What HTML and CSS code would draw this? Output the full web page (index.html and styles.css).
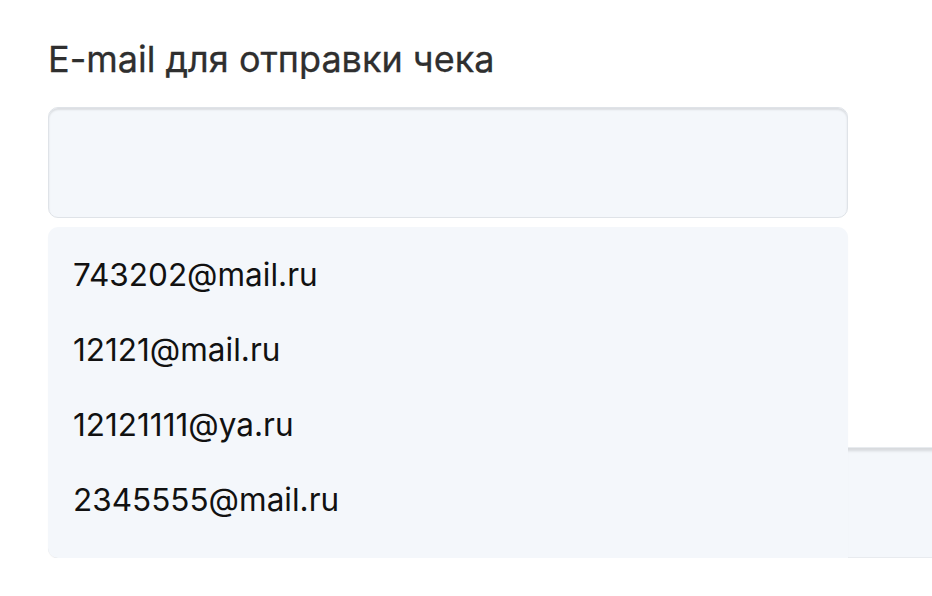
FILE: index.html
```html
<!DOCTYPE html>
<html lang="ru">
<head>
    <meta charset="UTF-8">
    <meta name="viewport" content="width=device-width, initial-scale=1.0">
    <title>E-mail для отправки чека</title>
    <link rel="stylesheet" href="styles.css">
</head>
<body>
    <div class="form">
        <label class="label" for="email">E-mail для отправки чека</label>
        <div class="field-wrap">
            <input class="field" type="email" id="email">
            <ul class="suggest">
                <li>743202@mail.ru</li>
                <li>12121@mail.ru</li>
                <li>12121111@ya.ru</li>
                <li>2345555@mail.ru</li>
            </ul>
        </div>
        <input class="field field-wide" type="text">
    </div>
</body>
</html>
```

FILE: styles.css
```css
html {
    overflow: hidden;
}
body {
    margin: 0;
    background: #fff;
    font-family: Inter, "Noto Sans", sans-serif;
}
.form {
    padding: 37px 0 0 48px;
    display: flex;
    flex-direction: column;
}
.label {
    display: block;
    font-size: 36px;
    font-weight: 400;
    line-height: 44px;
    color: #2f2f2f;
    -webkit-text-stroke: 0.3px #2f2f2f;
    margin-bottom: 26px;
}
.field-wrap {
    position: relative;
    width: 800px;
}
.field {
    box-sizing: border-box;
    display: block;
    width: 800px;
    height: 111px;
    margin: 0;
    padding: 0 24px;
    border: 1px solid #dfe3e8;
    border-radius: 10px;
    background: #f4f7fb;
    box-shadow: inset 0 2px 2px rgba(0, 0, 0, 0.1);
    outline: none;
}
.field-wide {
    width: 1100px;
    margin-top: 229px;
    border-color: #e8ebef;
    box-shadow: inset 0 3px 3px rgba(0, 0, 0, 0.12);
}
.suggest {
    position: absolute;
    top: 120px;
    left: 0;
    z-index: 2;
    box-sizing: border-box;
    width: 800px;
    height: 331px;
    margin: 0;
    padding: 10px 0 0;
    list-style: none;
    background: #f4f7fb;
    border-radius: 10px 10px 0 10px;
    box-shadow: 0 1px 1px rgba(0, 0, 0, 0.05);
}
.suggest li {
    padding: 0 25px;
    font-size: 31.5px;
    line-height: 75px;
    color: #111;
}
```
